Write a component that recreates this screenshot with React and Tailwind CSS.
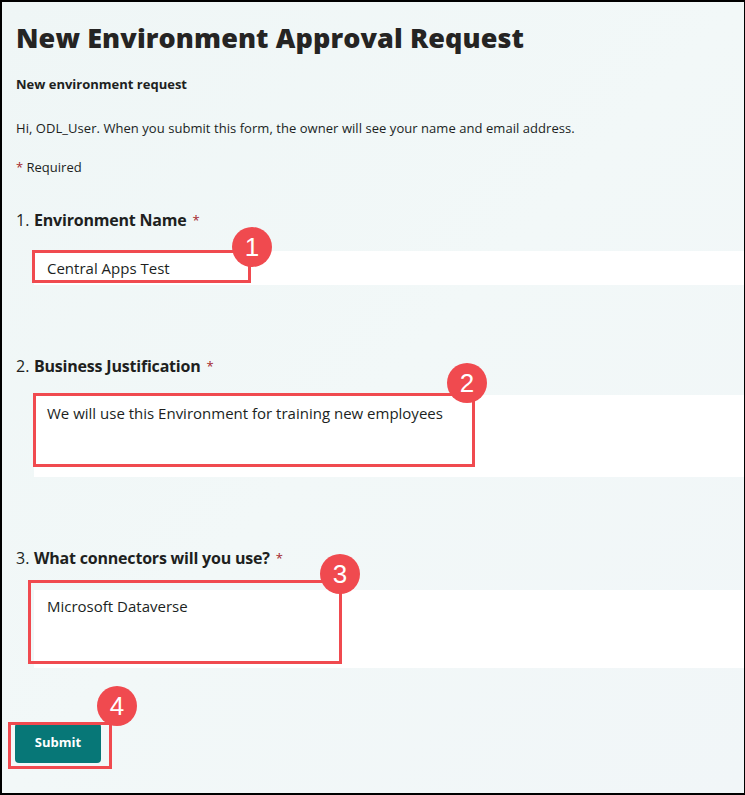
import React from 'react'

// Annotation overlay: red outline box plus numbered badge
function Marker({ n, box, badge }) {
  return (
    <>
      <div className={`pointer-events-none absolute border-[3px] border-[#f04a4f] ${box}`} />
      <div
        className={`absolute flex h-[40px] w-[40px] items-center justify-center rounded-full bg-[#f04a4f] text-[26px] leading-none text-white ${badge}`}
        style={{ fontFamily: '"Liberation Sans", Arial, sans-serif' }}
      >
        {n}
      </div>
    </>
  )
}

function Question({ num, label }) {
  return (
    <div className="flex items-center pl-[14px] text-[16px] leading-[24px] text-[#201f1e]">
      <span className="w-[18px]">{num}.</span>
      <span className="font-bold tracking-[-0.2px]">{label}</span>
      <span className="ml-[6px] text-[13px] text-[#a4262c]">*</span>
    </div>
  )
}

export default function App() {
  return (
    <div
      className="relative flex h-[795px] w-[745px] flex-col overflow-hidden border-t-2 border-b-2 border-l-2 border-r border-black bg-gradient-to-br from-[#eff6f6] via-[#f2f8f8] to-[#f1f6f8] text-[#201f1e]"
      style={{ fontFamily: '"Open Sans", "Noto Sans", sans-serif' }}
    >
      <h1 className="mt-[18px] pl-[14px] text-[27px] font-extrabold leading-[36px] tracking-[0.1px] text-[#252423]">
        New Environment Approval Request
      </h1>
      <p className="mt-[18px] pl-[14px] text-[13px] font-bold leading-[20px]">New environment request</p>
      <p className="mt-[24px] pl-[14px] text-[13px] leading-[20px] tracking-[0.05px]">
        Hi, ODL_User. When you submit this form, the owner will see your name and email address.
      </p>
      <p className="mt-[19px] pl-[14px] text-[13px] leading-[20px]">
        <span className="text-[#a4262c]">*</span> Required
      </p>

      <div className="mt-[31px]">
        <Question num="1" label="Environment Name" />
      </div>
      <div className="relative ml-[32px] mt-[19px] h-[34px] bg-white pl-[13px] text-[15px] leading-[34px]">
        Central Apps Test
        <Marker n="1" box="left-[-2px] top-[-1px] h-[33px] w-[219px]" badge="left-[198px] top-[-24px]" />
      </div>

      <div className="mt-[69px]">
        <Question num="2" label="Business Justification" />
      </div>
      <div className="relative ml-[32px] mt-[17px] h-[82px] bg-white pl-[13px] pt-[8px] text-[15px] leading-[20px]">
        We will use this Environment for training new employees
        <Marker n="2" box="left-[-1px] top-[-2px] h-[74px] w-[442px]" badge="left-[413px] top-[-32px]" />
      </div>

      <div className="mt-[69px]">
        <Question num="3" label="What connectors will you use?" />
      </div>
      <div className="relative ml-[32px] mt-[20px] h-[78px] bg-white pl-[13px] pt-[6px] text-[15px] leading-[20px]">
        Microsoft Dataverse
        <Marker n="3" box="left-[-6px] top-[-10px] h-[84px] w-[314px]" badge="left-[286px] top-[-36px]" />
      </div>

      <div className="relative ml-[13px] mt-[55px] self-start">
        <button
          type="button"
          className="h-[40px] w-[86px] rounded-[4px] bg-[#077777] text-[13px] font-bold text-white"
        >
          Submit
        </button>
        <Marker n="4" box="left-[-7px] top-[-1px] h-[47px] w-[104px]" badge="left-[82px] top-[-37px]" />
      </div>
    </div>
  )
}
